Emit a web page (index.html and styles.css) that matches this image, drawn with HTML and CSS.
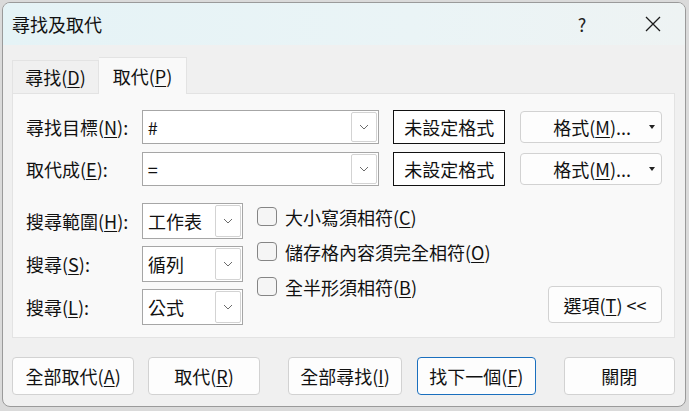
FILE: index.html
```html
<!DOCTYPE html>
<html lang="zh-Hant">
<head>
<meta charset="utf-8">
<title>尋找及取代</title>
<link rel="stylesheet" href="styles.css">
</head>
<body>
<div class="window">
  <div class="titlebar">
    <span class="title">尋找及取代</span>
    <span class="help">?</span>
    <span class="close"><svg width="16" height="16" viewBox="0 0 16 16"><path d="M1 1L15 15M15 1L1 15" stroke="#1c1c1c" stroke-width="1.3" fill="none"/></svg></span>
  </div>
  <div class="main">
    <div class="tabs">
      <div class="tab">尋找(<u>D</u>)</div>
      <div class="tab active">取代(<u>P</u>)</div>
    </div>
    <div class="panel">
      <div class="frow">
        <span class="flabel">尋找目標(<u>N</u>):</span>
        <div class="combo wide"><span class="val">#</span><span class="dd"><svg width="10" height="6" viewBox="0 0 10 6"><path d="M1 1L5 5L9 1" stroke="#6b6b6b" stroke-width="1" fill="none"/></svg></span></div>
        <div class="fmtbox">未設定格式</div>
        <div class="btn fmtbtn"><span>格式(<u>M</u>)...</span><span class="tri"></span></div>
      </div>
      <div class="frow">
        <span class="flabel">取代成(<u>E</u>):</span>
        <div class="combo wide"><span class="val">=</span><span class="dd"><svg width="10" height="6" viewBox="0 0 10 6"><path d="M1 1L5 5L9 1" stroke="#6b6b6b" stroke-width="1" fill="none"/></svg></span></div>
        <div class="fmtbox">未設定格式</div>
        <div class="btn fmtbtn"><span>格式(<u>M</u>)...</span><span class="tri"></span></div>
      </div>
      <div class="opts">
        <div class="optcol">
          <div class="orow">
            <span class="olabel">搜尋範圍(<u>H</u>):</span>
            <div class="combo small"><span class="val">工作表</span><span class="dd"><svg width="10" height="6" viewBox="0 0 10 6"><path d="M1 1L5 5L9 1" stroke="#6b6b6b" stroke-width="1" fill="none"/></svg></span></div>
          </div>
          <div class="orow">
            <span class="olabel">搜尋(<u>S</u>):</span>
            <div class="combo small"><span class="val">循列</span><span class="dd"><svg width="10" height="6" viewBox="0 0 10 6"><path d="M1 1L5 5L9 1" stroke="#6b6b6b" stroke-width="1" fill="none"/></svg></span></div>
          </div>
          <div class="orow">
            <span class="olabel">搜尋(<u>L</u>):</span>
            <div class="combo small"><span class="val">公式</span><span class="dd"><svg width="10" height="6" viewBox="0 0 10 6"><path d="M1 1L5 5L9 1" stroke="#6b6b6b" stroke-width="1" fill="none"/></svg></span></div>
          </div>
        </div>
        <div class="checks">
          <div class="chk"><span class="box"></span>大小寫須相符(<u>C</u>)</div>
          <div class="chk"><span class="box"></span>儲存格內容須完全相符(<u>O</u>)</div>
          <div class="chk"><span class="box"></span>全半形須相符(<u>B</u>)</div>
        </div>
        <div class="btn optbtn">選項(<u>T</u>) &lt;&lt;</div>
      </div>
    </div>
    <div class="actions">
      <div class="btn act a1">全部取代(<u>A</u>)</div>
      <div class="btn act a2">取代(<u>R</u>)</div>
      <div class="btn act a3">全部尋找(<u>I</u>)</div>
      <div class="btn act a4 default">找下一個(<u>F</u>)</div>
      <div class="btn act a5">關閉</div>
    </div>
  </div>
</div>
</body>
</html>
```
FILE: styles.css
```css
* { box-sizing: border-box; }
html, body { margin: 0; padding: 0; }
body {
  background: #dadada;
  padding: 2px;
  font-family: "Noto Sans CJK TC", "Noto Sans", sans-serif;
  font-size: 18px;
  color: #111;
}
u { text-underline-offset: 2px; text-decoration-thickness: 1px; }
.window {
  width: 684px;
  height: 405px;
  border: 1px solid #9a9a9a;
  border-radius: 8px;
  overflow: hidden;
  background: #f0f0f0;
}
.titlebar {
  height: 42px;
  display: flex;
  align-items: center;
  padding: 0 18px 0 9px;
  background: linear-gradient(90deg, #e5f3f6 0%, #eaf4f6 60%, #eef3f3 100%);
}
.title { font-size: 18px; line-height: 20px; }
.help {
  margin-left: auto;
  width: 20px;
  text-align: center;
  font-size: 18px;
  color: #222;
  line-height: 20px;
}
.close {
  margin-left: 47px;
  width: 28px;
  height: 20px;
  display: flex;
  align-items: center;
  justify-content: center;
}
.main { padding: 12px 10px 0 9px; }
.tabs { display: flex; align-items: flex-end; height: 36px; }
.tab {
  width: 87px;
  height: 33px;
  display: flex;
  align-items: center;
  justify-content: center;
  border: 1px solid #e3e3e3;
  border-bottom: none;
  line-height: 20px;
}
.tab.active {
  width: 88px;
  height: 37px;
  background: #f9f9f9;
  margin-bottom: -1px;
  position: relative;
  z-index: 1;
  border-color: #e3e3e3;
  border-left: none;
}
.panel {
  width: 663px;
  height: 245px;
  background: #f9f9f9;
  border: 1px solid #e3e3e3;
  padding: 16px 12px 11px 13px;
}
.frow {
  display: flex;
  align-items: center;
  height: 34px;
  margin-bottom: 8px;
}
.flabel { width: 116px; line-height: 20px; }
.combo {
  display: flex;
  align-items: center;
  background: #fff;
  border: 1px solid #a6a6a6;
  padding: 1px;
}
.combo .val { flex: 1; padding-left: 4px; line-height: 20px; }
.combo .dd {
  width: 26px;
  align-self: stretch;
  border: 1px solid #d3d3d3;
  border-radius: 2px;
  display: flex;
  align-items: center;
  justify-content: center;
  background: #fff;
}
.combo.wide { width: 238px; height: 34px; }
.combo.small { width: 101px; height: 36px; }
.fmtbox {
  width: 112px;
  height: 34px;
  margin-left: 14px;
  border: 1px solid #111;
  background: #fff;
  display: flex;
  align-items: center;
  justify-content: center;
  line-height: 20px;
}
.btn {
  background: #fdfdfd;
  border: 1px solid #d2d2d2;
  border-radius: 4px;
  display: flex;
  align-items: center;
  justify-content: center;
  line-height: 20px;
}
.fmtbtn {
  width: 142px;
  height: 32px;
  margin-left: 15px;
  justify-content: flex-start;
  padding: 0 6px 0 32px;
}
.fmtbtn .tri {
  margin-left: auto;
  width: 0;
  height: 0;
  border-left: 3.5px solid transparent;
  border-right: 3.5px solid transparent;
  border-top: 4px solid #222;
}
.opts {
  display: flex;
  padding-top: 9px;
}
.optcol { display: flex; flex-direction: column; gap: 7px; }
.orow { display: flex; align-items: center; }
.olabel { width: 116px; line-height: 20px; }
.checks {
  margin-left: 14px;
  margin-top: -4px;
  display: flex;
  flex-direction: column;
}
.chk {
  height: 35px;
  display: flex;
  align-items: center;
  line-height: 20px;
}
.chk .box {
  width: 20px;
  height: 19px;
  border: 1px solid #858585;
  border-radius: 4px;
  background: #f5f5f5;
  margin-right: 8px;
}
.optbtn {
  margin-left: auto;
  align-self: flex-end;
  margin-bottom: 2px;
  width: 114px;
  height: 37px;
}
.actions {
  display: flex;
  margin-top: 19px;
}
.act { height: 38px; }
.a1 { width: 123px; }
.a2 { width: 112px; margin-left: 14px; }
.a3 { width: 115px; margin-left: 28px; }
.a4 { width: 119px; margin-left: 15px; }
.a5 { width: 112px; margin-left: 28px; }
.default { border-color: #1a6fbe; }
```
